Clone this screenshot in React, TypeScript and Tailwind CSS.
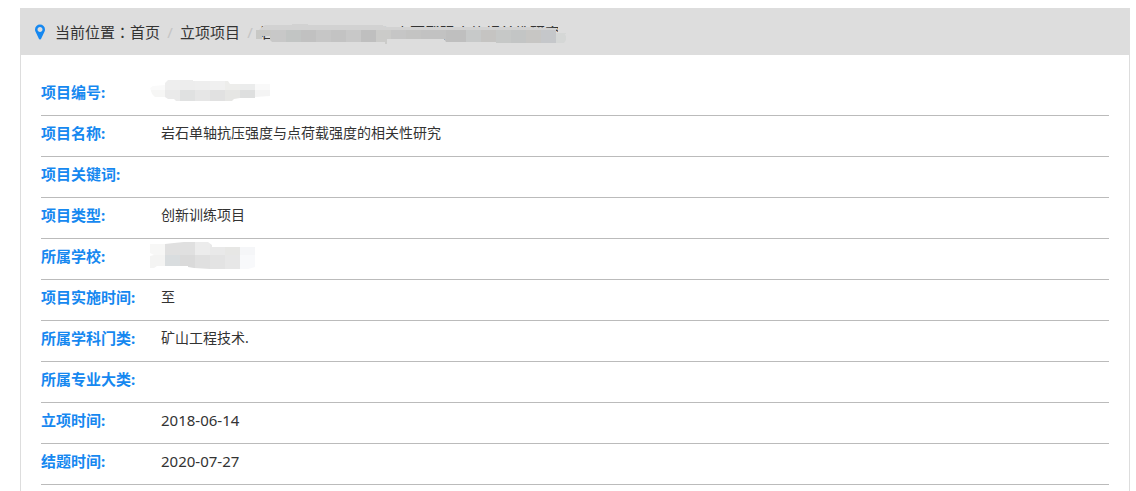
interface Field {
  label: string;
  value?: string;
  numeric?: boolean;
  masked?: "code" | "school";
}

// x, y, width, height, fill
type Tile = [number, number, number, number, string];

const TITLE = "岩石单轴抗压强度与点荷载强度的相关性研究";

const FIELDS: Field[] = [
  { label: "项目编号:", masked: "code" },
  { label: "项目名称:", value: TITLE },
  { label: "项目关键词:" },
  { label: "项目类型:", value: "创新训练项目" },
  { label: "所属学校:", masked: "school" },
  { label: "项目实施时间:", value: "至" },
  { label: "所属学科门类:", value: "矿山工程技术." },
  { label: "所属专业大类:" },
  { label: "立项时间:", value: "2018-06-14", numeric: true },
  { label: "结题时间:", value: "2020-07-27", numeric: true },
];

const TITLE_OUTLINE =
  "M0 6H3L6 3L9 1H36V0H52V1H127L131 3H270L300 4V8L303 9H308L310 12V16L308 19H240V18H190L188 15H131L129 18H16L14 16V12H6L6 15H0Z M127 0H312V2H127Z M302 0H312V10H302Z M129 15H188V20H129Z";

const TITLE_TILES: Tile[] = [
  [0, 0, 302, 6, "#d2d2d2"],
  [127, 0, 185, 2, "#dddddd"],
  [302, 2, 10, 8, "#dddddd"],
  [0, 6, 15, 14, "#c8c8c5"],
  [15, 6, 15, 14, "#c8c8c8"],
  [30, 6, 15, 14, "#c2c5c4"],
  [45, 6, 15, 14, "#c1c1c1"],
  [60, 6, 15, 14, "#c6c6c6"],
  [75, 6, 15, 14, "#c3c3c3"],
  [90, 6, 15, 14, "#c8c8c8"],
  [105, 6, 15, 14, "#bfbfbf"],
  [120, 6, 15, 14, "#cbcbc9"],
  [135, 6, 15, 14, "#c6c6c6"],
  [150, 6, 15, 14, "#c4c4c3"],
  [165, 6, 25, 14, "#c2c2c2"],
  [131, 15, 57, 5, "#dddddd"],
  [190, 6, 20, 14, "#bfbfbf"],
  [210, 6, 15, 14, "#c7c9c9"],
  [225, 6, 15, 14, "#c5c4c2"],
  [240, 6, 15, 14, "#c6c8c7"],
  [255, 6, 15, 14, "#c3c5c5"],
  [270, 6, 15, 14, "#c7c6c4"],
  [285, 6, 15, 14, "#c5c7ca"],
  [300, 9, 10, 11, "#d5d7d6"],
];

const CODE_OUTLINE =
  "M0 8L3 6L15 5V3L18 0H43V1H78L80 4H120V16L105 17V18H90L84 19L82 21H26L24 19H18L15 17H5L2 14Z";

const CODE_TILES: Tile[] = [
  [0, 0, 15, 10, "#fafafa"],
  [0, 10, 15, 11, "#f6f6f5"],
  [15, 0, 15, 10, "#eeeeee"],
  [15, 10, 15, 11, "#eaeaea"],
  [30, 0, 15, 10, "#ededed"],
  [30, 10, 15, 11, "#e0e1e1"],
  [45, 0, 15, 10, "#eeeeee"],
  [45, 10, 15, 11, "#e6e6e6"],
  [60, 0, 15, 10, "#f0f0f0"],
  [60, 10, 15, 11, "#e1e1e1"],
  [75, 0, 15, 10, "#ededeb"],
  [75, 10, 15, 11, "#e6e6e4"],
  [90, 0, 15, 10, "#ebecec"],
  [90, 10, 15, 11, "#dedfdf"],
  [105, 0, 15, 10, "#f9f9f9"],
  [105, 10, 15, 11, "#f4f4f4"],
];

const SCHOOL_OUTLINE =
  "M0 2H15L24 1L34 0H58L62 3V5H105V25L98 27H60L44 26L38 25V24H7L4 26H0V14L4 13L0 11Z";

const SCHOOL_TILES: Tile[] = [
  [0, 0, 15, 13, "#f7f7f6"],
  [0, 13, 15, 14, "#f4f4f3"],
  [15, 0, 15, 13, "#e0e0e0"],
  [15, 13, 15, 14, "#d9dddf"],
  [30, 0, 15, 13, "#e0e0e0"],
  [30, 13, 15, 14, "#dadada"],
  [45, 0, 15, 13, "#ececec"],
  [45, 13, 15, 14, "#e0e0e0"],
  [60, 0, 15, 13, "#e9e9e9"],
  [60, 13, 15, 14, "#e3e3e3"],
  [75, 0, 15, 13, "#e7e7e5"],
  [75, 13, 15, 14, "#e7e7e7"],
  [90, 0, 15, 13, "#f5f6f8"],
  [90, 13, 15, 14, "#f8f9fb"],
];

/**
 * Mosaic patch that hides private text.
 */
function Mosaic({
  id,
  outline,
  tiles,
  width,
  height,
  className,
}: {
  id: string;
  outline: string;
  tiles: Tile[];
  width: number;
  height: number;
  className: string;
}) {
  return (
    <svg
      width={width}
      height={height}
      viewBox={`0 0 ${width} ${height}`}
      shapeRendering="crispEdges"
      className={className}
      aria-hidden="true"
    >
      <clipPath id={id}>
        <path d={outline} />
      </clipPath>
      <g clipPath={`url(#${id})`}>
        {tiles.map(([x, y, w, h, fill]) => (
          <rect key={`${x}-${y}`} x={x} y={y} width={w} height={h} fill={fill} />
        ))}
      </g>
    </svg>
  );
}

function PinIcon() {
  return (
    <svg width="10" height="16" viewBox="0 0 1024 1536" className="mr-2.5 shrink-0 fill-[#1688f0]" aria-hidden="true">
      <path d="M768 512q0-106-75-181t-181-75-181 75-75 181 75 181 181 75 181-75 75-181zm256 0q0 109-33 179l-364 774q-16 33-47.5 52t-67.5 19-67.5-19-46.5-52l-365-774q-33-70-33-179 0-212 150-362t362-150 362 150 150 362z" />
    </svg>
  );
}

function Slash() {
  return <span className="w-5 text-center text-[#c4c4c4]">/</span>;
}

export default function App() {
  return (
    <main className="mr-1.5 ml-5 bg-white pt-2 font-['Noto_Sans','Noto_Sans_CJK_SC',sans-serif] text-[#333]">
      {/* Breadcrumb */}
      <nav className="flex h-[47px] items-center bg-[#ddd] px-[15px] pt-px text-[15px] leading-5 whitespace-nowrap">
        <PinIcon />
        <span>
          当前位置<span className="font-['Noto_Sans_CJK_TC',sans-serif]">：</span>
        </span>
        <a href="#home">首页</a>
        <Slash />
        <a href="#projects">立项项目</a>
        <Slash />
        <span className="relative">
          {TITLE}
          <Mosaic
            id="mask-title"
            outline={TITLE_OUTLINE}
            tiles={TITLE_TILES}
            width={312}
            height={20}
            className="absolute top-0.5 -left-1 max-w-none"
          />
        </span>
      </nav>

      {/* Project details */}
      <dl className="border-x border-[#ddd] px-5 pt-5 pb-1.5">
        {FIELDS.map((field) => (
          <div key={field.label} className="flex h-[41px] items-center border-b border-[#bbb] pb-1.5">
            <dt className="w-[120px] shrink-0 text-[15px] leading-5 font-bold text-[#1688f0]">{field.label}</dt>
            <dd className={field.numeric ? "text-[15px] leading-5" : "text-sm leading-5"}>
              {field.value}
              {field.masked === "code" && (
                <Mosaic
                  id="mask-code"
                  outline={CODE_OUTLINE}
                  tiles={CODE_TILES}
                  width={120}
                  height={21}
                  className="-mt-1 -ml-[11px]"
                />
              )}
              {field.masked === "school" && (
                <Mosaic
                  id="mask-school"
                  outline={SCHOOL_OUTLINE}
                  tiles={SCHOOL_TILES}
                  width={105}
                  height={27}
                  className="-mt-0.5 -ml-[11px]"
                />
              )}
            </dd>
          </div>
        ))}
      </dl>
    </main>
  );
}
